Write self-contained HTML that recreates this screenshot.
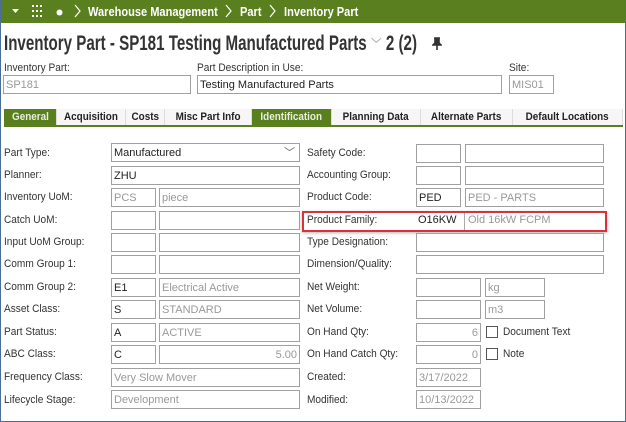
<!DOCTYPE html>
<html><head><meta charset="utf-8"><style>
*{box-sizing:border-box;margin:0;padding:0}
body{width:626px;height:422px;overflow:hidden;background:#fff;font-family:"Liberation Sans",sans-serif;position:relative}
.frame{position:absolute;left:0;top:0;width:626px;height:422px;border:1px solid #4a6e9c;border-top:none;pointer-events:none}
.bar{position:absolute;left:0;top:0;width:626px;height:23px;background:#5a7f1e;color:#fff;font-weight:bold;font-size:13px}
.bar span{position:absolute;top:4px;white-space:nowrap;transform:scaleX(.85);transform-origin:left}
.t{position:absolute;white-space:nowrap}
.title{left:4px;top:32px;font-size:21px;font-weight:bold;color:#333;transform:scaleX(.72);transform-origin:left}
.lab{font-size:11px;color:#333;transform:scaleX(.92);transform-origin:left}
.in{position:absolute;border:1px solid #a0a0a0;background:#fff;font-size:11px;padding:2px 2px;white-space:nowrap;overflow:hidden;color:#222;line-height:14px}
.in.g{color:#999}
.in.r{text-align:right}
.tabs{position:absolute;left:4px;top:109px;width:619px;height:18px;background:#f6f6f6;border-bottom:2px solid #5a7f1e}
.tab{position:absolute;top:0;height:16px;font-size:11px;font-weight:bold;color:#222;line-height:16px;border-right:1px solid #ddd;white-space:nowrap;display:flex;justify-content:center}
.tab span{flex-shrink:0;display:inline-block;transform:scaleX(.9)}
.tab.on{background:#5a7f1e;color:#e8eedd}
.cb{position:absolute;width:12px;height:12px;border:1px solid #555;background:#fff}
</style></head><body>
<div class="bar">
<svg style="position:absolute;left:12px;top:9px" width="8" height="6"><path d="M0 0h7L3.5 4z" fill="#fff"/></svg>
<svg style="position:absolute;left:32px;top:5px" width="12" height="13" fill="#fff"><rect x="0" y="0" width="2" height="2"/><rect x="4" y="0" width="2" height="2"/><rect x="8" y="0" width="2" height="2"/><rect x="0" y="5" width="2" height="2"/><rect x="4" y="5" width="2" height="2"/><rect x="8" y="5" width="2" height="2"/><rect x="0" y="10" width="2" height="2"/><rect x="4" y="10" width="2" height="2"/><rect x="8" y="10" width="2" height="2"/></svg>
<svg style="position:absolute;left:56px;top:9px" width="7" height="7"><circle cx="3.5" cy="3.5" r="3" fill="#fff"/></svg>
<svg style="position:absolute;left:74px;top:4px" width="8" height="14"><path d="M1 1l5 6-5 6" stroke="#fff" fill="none" stroke-width="1.2"/></svg>
<span style="left:88px">Warehouse Management</span>
<svg style="position:absolute;left:225px;top:4px" width="8" height="14"><path d="M1 1l5 6-5 6" stroke="#fff" fill="none" stroke-width="1.2"/></svg>
<span style="left:240px">Part</span>
<svg style="position:absolute;left:269px;top:4px" width="8" height="14"><path d="M1 1l5 6-5 6" stroke="#fff" fill="none" stroke-width="1.2"/></svg>
<span style="left:284px">Inventory Part</span>
</div>
<div class="t title">Inventory Part - SP181 Testing Manufactured Parts <span style="color:#aaa;font-weight:normal;font-size:15px">﹀</span> 2 (2)</div>
<svg style="position:absolute;left:432px;top:37px" width="10" height="14"><path d="M2 1h6M3 1v5l-2 2h8l-2-2V1M5 8v5" stroke="#333" stroke-width="1.6" fill="#333"/></svg>
<div class="t lab" style="left:4px;top:62px">Inventory Part:</div>
<div class="t lab" style="left:197px;top:62px">Part Description in Use:</div>
<div class="t lab" style="left:509px;top:62px">Site:</div>
<div class="in g" style="left:3px;top:75px;width:188px;height:19px">SP181</div>
<div class="in" style="left:197px;top:75px;width:305px;height:19px">Testing Manufactured Parts</div>
<div class="in g" style="left:509px;top:75px;width:45px;height:19px">MIS01</div>
<div class="tabs">
<div class="tab on" style="left:0;width:53px"><span>General</span></div>
<div class="tab" style="left:53px;width:69px"><span>Acquisition</span></div>
<div class="tab" style="left:122px;width:39px"><span>Costs</span></div>
<div class="tab" style="left:161px;width:87px"><span>Misc Part Info</span></div>
<div class="tab on" style="left:248px;width:80px"><span>Identification</span></div>
<div class="tab" style="left:328px;width:89px"><span>Planning Data</span></div>
<div class="tab" style="left:417px;width:92px"><span>Alternate Parts</span></div>
<div class="tab" style="left:509px;width:110px"><span>Default Locations</span></div>
</div>

<div class="t lab" style="left:4px;top:147px">Part Type:</div>
<div class="in" style="left:111px;top:143px;width:189px;height:19px">Manufactured<span style="position:absolute;right:4px;color:#666">﹀</span></div>
<div class="t lab" style="left:4px;top:169px">Planner:</div>
<div class="in" style="left:111px;top:166px;width:189px;height:19px">ZHU</div>
<div class="t lab" style="left:4px;top:191px">Inventory UoM:</div>
<div class="in g" style="left:111px;top:188px;width:45px;height:19px">PCS</div>
<div class="in g" style="left:159px;top:188px;width:141px;height:19px">piece</div>
<div class="t lab" style="left:4px;top:214px">Catch UoM:</div>
<div class="in" style="left:111px;top:211px;width:45px;height:19px"></div>
<div class="in" style="left:159px;top:211px;width:141px;height:19px"></div>
<div class="t lab" style="left:4px;top:236px">Input UoM Group:</div>
<div class="in" style="left:111px;top:233px;width:45px;height:19px"></div>
<div class="in" style="left:159px;top:233px;width:141px;height:19px"></div>
<div class="t lab" style="left:4px;top:258px">Comm Group 1:</div>
<div class="in" style="left:111px;top:255px;width:45px;height:19px"></div>
<div class="in" style="left:159px;top:255px;width:141px;height:19px"></div>
<div class="t lab" style="left:4px;top:281px">Comm Group 2:</div>
<div class="in" style="left:111px;top:278px;width:45px;height:19px">E1</div>
<div class="in g" style="left:159px;top:278px;width:141px;height:19px">Electrical Active</div>
<div class="t lab" style="left:4px;top:303px">Asset Class:</div>
<div class="in" style="left:111px;top:300px;width:45px;height:19px">S</div>
<div class="in g" style="left:159px;top:300px;width:141px;height:19px">STANDARD</div>
<div class="t lab" style="left:4px;top:326px">Part Status:</div>
<div class="in" style="left:111px;top:323px;width:45px;height:19px">A</div>
<div class="in g" style="left:159px;top:323px;width:141px;height:19px">ACTIVE</div>
<div class="t lab" style="left:4px;top:348px">ABC Class:</div>
<div class="in" style="left:111px;top:345px;width:45px;height:19px">C</div>
<div class="in g r" style="left:159px;top:345px;width:141px;height:19px">5.00</div>
<div class="t lab" style="left:4px;top:371px">Frequency Class:</div>
<div class="in g" style="left:111px;top:368px;width:189px;height:19px">Very Slow Mover</div>
<div class="t lab" style="left:4px;top:394px">Lifecycle Stage:</div>
<div class="in g" style="left:111px;top:390px;width:189px;height:19px">Development</div>

<div class="t lab" style="left:307px;top:147px">Safety Code:</div>
<div class="in" style="left:416px;top:144px;width:45px;height:19px"></div>
<div class="in" style="left:465px;top:144px;width:139px;height:19px"></div>
<div class="t lab" style="left:307px;top:169px">Accounting Group:</div>
<div class="in" style="left:416px;top:166px;width:45px;height:19px"></div>
<div class="in" style="left:465px;top:166px;width:139px;height:19px"></div>
<div class="t lab" style="left:307px;top:191px">Product Code:</div>
<div class="in" style="left:416px;top:188px;width:45px;height:19px">PED</div>
<div class="in g" style="left:465px;top:188px;width:139px;height:19px">PED - PARTS</div>
<div style="position:absolute;left:302px;top:211px;width:305px;height:21px;border:2px solid #d9323a;box-shadow:0 1px 3px rgba(0,0,0,.3)"></div>
<div class="t lab" style="left:307px;top:214px">Product Family:</div>
<div class="t" style="left:418px;top:214px;font-size:11px;color:#222">O16KW</div>
<div style="position:absolute;left:464px;top:213px;width:1px;height:17px;background:#aaa"></div>
<div class="t" style="left:468px;top:214px;font-size:11px;color:#999">Old 16kW FCPM</div>
<div class="t lab" style="left:307px;top:236px">Type Designation:</div>
<div class="in" style="left:416px;top:233px;width:188px;height:19px"></div>
<div class="t lab" style="left:307px;top:258px">Dimension/Quality:</div>
<div class="in" style="left:416px;top:255px;width:188px;height:19px"></div>
<div class="t lab" style="left:307px;top:281px">Net Weight:</div>
<div class="in" style="left:416px;top:278px;width:65px;height:19px"></div>
<div class="in g" style="left:485px;top:278px;width:60px;height:19px">kg</div>
<div class="t lab" style="left:307px;top:303px">Net Volume:</div>
<div class="in" style="left:416px;top:300px;width:65px;height:19px"></div>
<div class="in g" style="left:485px;top:300px;width:60px;height:19px">m3</div>
<div class="t lab" style="left:307px;top:326px">On Hand Qty:</div>
<div class="in g r" style="left:416px;top:323px;width:65px;height:19px">6</div>
<div class="cb" style="left:486px;top:326px"></div>
<div class="t lab" style="left:503px;top:326px">Document Text</div>
<div class="t lab" style="left:307px;top:348px">On Hand Catch Qty:</div>
<div class="in g r" style="left:416px;top:345px;width:65px;height:19px">0</div>
<div class="cb" style="left:486px;top:348px"></div>
<div class="t lab" style="left:503px;top:348px">Note</div>
<div class="t lab" style="left:307px;top:371px">Created:</div>
<div class="in g" style="left:416px;top:368px;width:65px;height:19px">3/17/2022</div>
<div class="t lab" style="left:307px;top:394px">Modified:</div>
<div class="in g" style="left:416px;top:390px;width:65px;height:19px">10/13/2022</div>
<div class="frame"></div>
</body></html>
